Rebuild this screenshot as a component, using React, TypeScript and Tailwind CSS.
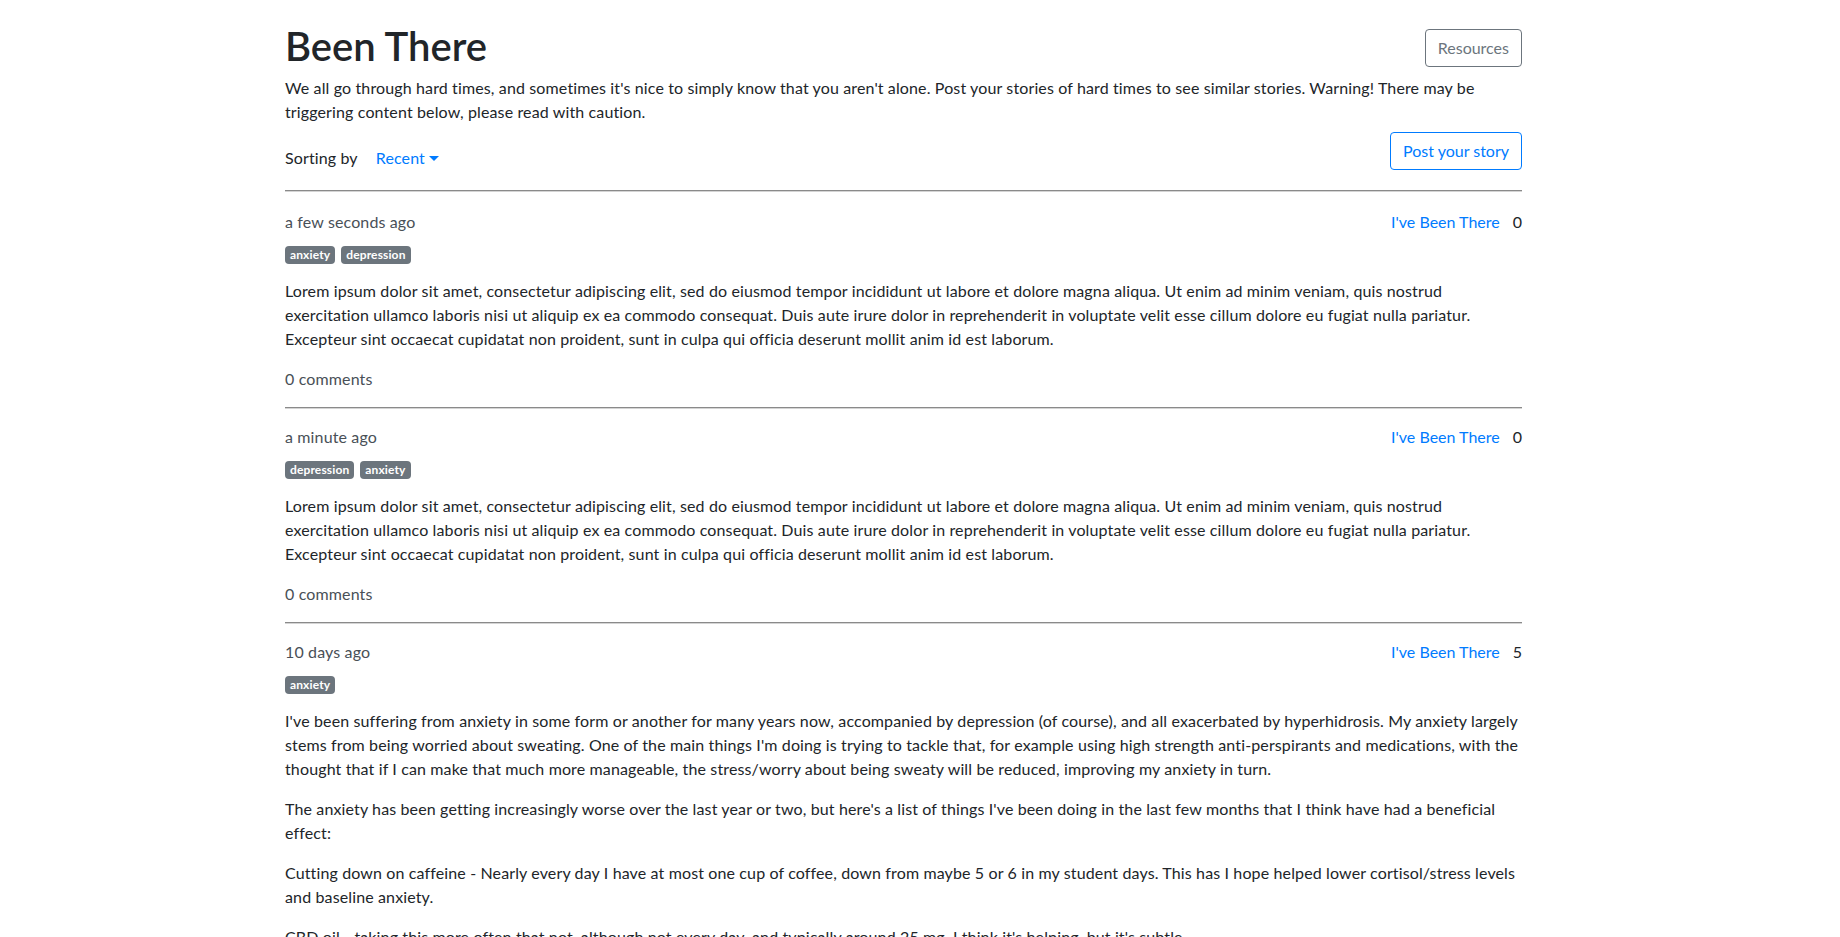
import React from "react";

const lorem =
  "Lorem ipsum dolor sit amet, consectetur adipiscing elit, sed do eiusmod tempor incididunt ut labore et dolore magna aliqua. Ut enim ad minim veniam, quis nostrud exercitation ullamco laboris nisi ut aliquip ex ea commodo consequat. Duis aute irure dolor in reprehenderit in voluptate velit esse cillum dolore eu fugiat nulla pariatur. Excepteur sint occaecat cupidatat non proident, sunt in culpa qui officia deserunt mollit anim id est laborum.";

const stories = [
  {
    id: 1,
    time: "a few seconds ago",
    tags: ["anxiety", "depression"],
    body: [lorem],
    count: 0,
    comments: 0,
  },
  {
    id: 2,
    time: "a minute ago",
    tags: ["depression", "anxiety"],
    body: [lorem],
    count: 0,
    comments: 0,
  },
  {
    id: 3,
    time: "10 days ago",
    tags: ["anxiety"],
    body: [
      "I've been suffering from anxiety in some form or another for many years now, accompanied by depression (of course), and all exacerbated by hyperhidrosis. My anxiety largely stems from being worried about sweating. One of the main things I'm doing is trying to tackle that, for example using high strength anti-perspirants and medications, with the thought that if I can make that much more manageable, the stress/worry about being sweaty will be reduced, improving my anxiety in turn.",
      "The anxiety has been getting increasingly worse over the last year or two, but here's a list of things I've been doing in the last few months that I think have had a beneficial effect:",
      "Cutting down on caffeine - Nearly every day I have at most one cup of coffee, down from maybe 5 or 6 in my student days. This has I hope helped lower cortisol/stress levels and baseline anxiety.",
      "CBD oil - taking this more often that not, although not every day, and typically around 25 mg. I think it's helping, but it's subtle.",
    ],
    count: 5,
    comments: 0,
  },
];

const Rule = () => (
  <div className="border-t border-b border-t-[#8a8a8a] border-b-[#d4d4d4]" />
);

const Story = ({ story }: { story: (typeof stories)[number] }) => (
  <div className="pt-4">
    {/* time + been there */}
    <div className="flex h-6 items-center justify-between">
      <span className="text-[#495057]">{story.time}</span>
      <div className="flex items-center tracking-normal">
        <button className="text-[#007bff]">I've Been There</button>
        <span className="ml-[13px]">{story.count}</span>
      </div>
    </div>
    {/* tags */}
    <div className="mt-3 flex h-[18px] gap-[6px]">
      {story.tags.map((t) => (
        <span
          key={t}
          className="rounded-[4px] bg-[#6c757d] px-[5px] text-[12px] font-bold leading-[18px] text-white"
        >
          {t}
        </span>
      ))}
    </div>
    <div className="mt-[15px]">
      {story.body.map((p, i) => (
        <p key={i} className="mb-4">
          {p}
        </p>
      ))}
    </div>
    <div className="mb-4 text-[#495057]">{story.comments} comments</div>
    <Rule />
  </div>
);

export default function App() {
  return (
    <div
      className="min-h-screen bg-white text-[16px] leading-6 tracking-[0.13px] text-[#212529]"
      style={{ fontFamily: "Lato, 'Open Sans', sans-serif" }}
    >
      <div className="ml-[285px] w-[1237px] pt-5">
        {/* header */}
        <div className="flex items-start justify-between">
          <h1 className="mt-[2px] text-[40px] font-semibold leading-[48px] tracking-normal">Been There</h1>
          <button className="mt-[9px] rounded-[4px] border border-[#6c757d] px-3 py-[6px] tracking-normal text-[#6c757d]">
            Resources
          </button>
        </div>
        <p className="mt-[6px]">
          We all go through hard times, and sometimes it's nice to simply know that you aren't alone. Post your
          stories of hard times to see similar stories. Warning! There may be triggering content below, please read
          with caution.
        </p>
        <div className="mt-2 flex items-end justify-between">
          <div className="flex items-center">
            <span>Sorting by</span>
            <button className="ml-[18px] flex items-center text-[#007bff]">
              Recent
              <span className="ml-1 mt-[1px] border-x-[5px] border-t-[5px] border-x-transparent border-t-[#007bff]" />
            </button>
          </div>
          <button className="rounded-[4px] border border-[#007bff] px-3 py-[6px] tracking-normal text-[#007bff]">
            Post your story
          </button>
        </div>
        <div className="mt-5">
          <Rule />
        </div>
        <div className="pt-[2px]">
          {stories.map((s) => (
            <Story key={s.id} story={s} />
          ))}
        </div>
      </div>
    </div>
  );
}
